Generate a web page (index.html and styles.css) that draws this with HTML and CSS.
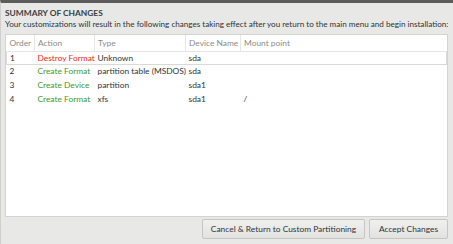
FILE: index.html
```html
<!DOCTYPE html>
<html lang="en">
<head>
    <meta charset="UTF-8">
    <title>Summary of Changes</title>
    <link rel="stylesheet" href="styles.css">
</head>
<body>
    <div class="dialog">
        <h2>SUMMARY OF CHANGES</h2>
        <p class="intro">Your customizations will result in the following changes taking effect after you return to the main menu and begin installation:</p>

        <div class="changes">
            <table>
                <thead>
                    <tr>
                        <th class="c-order">Order</th>
                        <th class="c-action">Action</th>
                        <th class="c-type">Type</th>
                        <th class="c-device">Device Name</th>
                        <th class="c-mount">Mount point</th>
                    </tr>
                </thead>
                <tbody>
                    <tr class="focused">
                        <td>1</td>
                        <td class="destroy">Destroy Format</td>
                        <td>Unknown</td>
                        <td>sda</td>
                        <td></td>
                    </tr>
                    <tr>
                        <td>2</td>
                        <td class="create">Create Format</td>
                        <td>partition table (MSDOS)</td>
                        <td>sda</td>
                        <td></td>
                    </tr>
                    <tr>
                        <td>3</td>
                        <td class="create">Create Device</td>
                        <td>partition</td>
                        <td>sda1</td>
                        <td></td>
                    </tr>
                    <tr>
                        <td>4</td>
                        <td class="create">Create Format</td>
                        <td>xfs</td>
                        <td>sda1</td>
                        <td>/</td>
                    </tr>
                </tbody>
            </table>
        </div>

        <div class="buttons">
            <button type="button" class="btn btn-cancel">Cancel &amp; Return to Custom Partitioning</button>
            <button type="button" class="btn btn-accept">Accept Changes</button>
        </div>
    </div>
</body>
</html>
```

FILE: styles.css
```css
* {
    margin: 0;
    padding: 0;
    box-sizing: border-box;
}

body {
    font-family: 'Lato', 'DejaVu Sans', sans-serif;
    background: #e8e8e7;
    color: #2e3436;
    width: 453px;
    height: 244px;
    overflow: hidden;
}

.dialog {
    height: 244px;
    border-top: 3px solid #5c5c5c;
    border-left: 1px solid #cfcfcd;
    padding: 5px 5px 5px 4px;
    display: flex;
    flex-direction: column;
}

h2 {
    font-size: 8.4px;
    font-weight: bold;
    color: #3a3f41;
    line-height: 11px;
}

.intro {
    font-size: 8.1px;
    line-height: 11px;
    white-space: nowrap;
}

.changes {
    margin-top: 4px;
    height: 183px;
    background: #fff;
    border: 1px solid #d3d3d1;
}

table {
    width: 100%;
    border-collapse: collapse;
    table-layout: fixed;
    font-size: 8.4px;
}

th {
    font-weight: normal;
    color: #8a8c87;
    text-align: left;
    height: 16px;
    padding: 0 3px;
    white-space: nowrap;
    border-right: 1px solid #e6e6e5;
    border-bottom: 1px solid #e6e6e5;
}

th:last-child {
    border-right: none;
}

.c-order { width: 28px; }
.c-action { width: 60px; }
.c-type { width: 91px; }
.c-device { width: 55px; }

td {
    height: 14px;
    padding: 0 3px;
    white-space: nowrap;
}

tbody tr:first-child td {
    height: 13px;
}

.focused td {
    border-top: 1px solid #d9d9d8;
    border-bottom: 1px solid #d9d9d8;
}

.focused td:first-child {
    border-left: 1px solid #d9d9d8;
}

.focused td:last-child {
    border-right: 1px solid #d9d9d8;
}

.destroy {
    color: #ef2929;
}

.create {
    color: #3a9a2a;
}

.buttons {
    display: flex;
    justify-content: flex-end;
    gap: 4px;
    margin-top: 2px;
}

.btn {
    font-family: inherit;
    font-size: 8.4px;
    color: #2e3436;
    height: 20px;
    background: linear-gradient(#f0f0ef, #e2e2e1);
    border: 1px solid #c5c5c3;
    border-radius: 2px;
}

.btn-cancel {
    width: 163px;
}

.btn-accept {
    width: 79px;
}
```
